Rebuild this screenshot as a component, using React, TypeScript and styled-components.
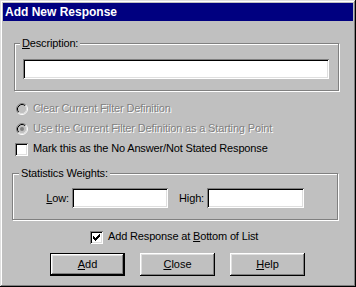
import React from "react";
import styled, { createGlobalStyle, css } from "styled-components";

const Global = createGlobalStyle`
  html, body { margin: 0; padding: 0; background: #c0c0c0; }
  body { font-family: "Liberation Sans", Arial, sans-serif; font-size: 11px; }
`;

const Window = styled.div`
  box-sizing: border-box;
  width: 356px;
  height: 287px;
  padding: 3px;
  background: #c0c0c0;
  box-shadow: inset -1px -1px #000, inset 1px 1px #dfdfdf, inset -2px -2px #808080,
    inset 2px 2px #fff;
  display: flex;
  flex-direction: column;
  font-family: "Liberation Sans", Arial, sans-serif;
  font-size: 11px;
  line-height: 13px;
  letter-spacing: -0.15px;
  color: #000;
`;

const TitleBar = styled.div`
  height: 18px;
  background: #000080;
  color: #fff;
  font-weight: bold;
  font-size: 12px;
  letter-spacing: 0;
  padding-left: 2px;
  display: flex;
  align-items: center;
  flex-shrink: 0;
`;

const Content = styled.div`
  display: flex;
  flex-direction: column;
  align-items: flex-start;
`;

const GroupBox = styled.fieldset<{ $left: number; $top: number; $width: number }>`
  box-sizing: border-box;
  margin: ${(p) => p.$top}px 0 0 ${(p) => p.$left}px;
  padding: 0;
  min-width: 0;
  width: ${(p) => p.$width}px;
  border: 1px solid #808080;
  box-shadow: inset 1px 1px #fff, 1px 1px #fff;
`;

const GroupLabel = styled.legend<{ $inset: number }>`
  margin-left: ${(p) => p.$inset}px;
  padding: 0 2px;
  line-height: 13px;
  background: #c0c0c0;
`;

const sunken = css`
  box-sizing: border-box;
  height: 20px;
  border: none;
  outline: none;
  background: #fff;
  padding: 2px 3px;
  font: inherit;
  box-shadow: inset 1px 1px #808080, inset -1px -1px #fff, inset 2px 2px #000,
    inset -2px -2px #dfdfdf;
`;

const TextField = styled.input<{ $width: number }>`
  ${sunken};
  width: ${(p) => p.$width}px;
  display: block;
`;

const DescField = styled(TextField)`
  margin: 9px 0 11px 8px;
`;

const StatRow = styled.div`
  display: flex;
  align-items: center;
  margin: 8px 0 11px 0;
`;

const FieldLabel = styled.label<{ $width: number }>`
  width: ${(p) => p.$width}px;
  text-align: right;
  margin-right: 3px;
  white-space: nowrap;
`;

const OptionRow = styled.label<{ $left: number; $top: number; $disabled?: boolean }>`
  display: flex;
  align-items: flex-start;
  height: 13px;
  margin: ${(p) => p.$top}px 0 0 ${(p) => p.$left}px;
  white-space: nowrap;
  color: ${(p) => (p.$disabled ? "#808080" : "#000")};
  text-shadow: ${(p) => (p.$disabled ? "1px 1px 0 #fff" : "none")};
`;

const OptionText = styled.span<{ $gap: number }>`
  margin-left: ${(p) => p.$gap}px;
`;

const RadioMark = styled.svg`
  width: 12px;
  height: 12px;
  margin-top: 1px;
  flex-shrink: 0;
`;

const CheckBox = styled.span`
  box-sizing: border-box;
  width: 13px;
  height: 13px;
  flex-shrink: 0;
  background: #fff;
  margin-top: 1px;
  box-shadow: inset 1px 1px #808080, inset -1px -1px #fff, inset 2px 2px #000,
    inset -2px -2px #dfdfdf;
  display: flex;
`;

const ButtonRow = styled.div`
  display: flex;
  gap: 15px;
  margin: 10px 0 0 47px;
`;

const Button = styled.button<{ $default?: boolean }>`
  box-sizing: border-box;
  width: 75px;
  height: 23px;
  border: none;
  padding: 0;
  background: #c0c0c0;
  font: inherit;
  line-height: 13px;
  color: #000;
  box-shadow: ${(p) =>
    p.$default
      ? "inset 0 0 0 1px #000, inset -2px -2px #000, inset 2px 2px #fff, inset -3px -3px #808080, inset 3px 3px #dfdfdf"
      : "inset -1px -1px #000, inset 1px 1px #fff, inset -2px -2px #808080, inset 2px 2px #dfdfdf"};
`;

function Radio({ checked }: { checked?: boolean }) {
  return (
    <RadioMark viewBox="0 0 12 12">
      <circle cx="6" cy="6" r="4.5" fill="#c0c0c0" />
      <path d="M2.11 9.89 A5.5 5.5 0 0 1 9.89 2.11" fill="none" stroke="#808080" />
      <path d="M9.89 2.11 A5.5 5.5 0 0 1 2.11 9.89" fill="none" stroke="#fff" />
      <path d="M2.82 9.18 A4.5 4.5 0 0 1 9.18 2.82" fill="none" stroke="#000" />
      <path d="M9.18 2.82 A4.5 4.5 0 0 1 2.82 9.18" fill="none" stroke="#dfdfdf" />
      {checked && <circle cx="6" cy="6" r="2" fill="#808080" />}
    </RadioMark>
  );
}

function Check({ checked }: { checked?: boolean }) {
  return (
    <CheckBox>
      {checked && (
        <svg width="13" height="13" viewBox="0 0 13 13" shapeRendering="crispEdges">
          <path
            fill="#000"
            d="M3 5h1v3h-1z M4 6h1v3h-1z M5 7h1v3h-1z M6 6h1v3h-1z M7 5h1v3h-1z M8 4h1v3h-1z M9 3h1v3h-1z"
          />
        </svg>
      )}
    </CheckBox>
  );
}

export default function App() {
  return (
    <>
      <Global />
      <Window>
        <TitleBar>Add New Response</TitleBar>
        <Content>
          <GroupBox $left={11} $top={16} $width={325}>
            <GroupLabel $inset={5}>
              <u>D</u>escription:
            </GroupLabel>
            <DescField $width={306} defaultValue="" />
          </GroupBox>

          <OptionRow $left={13} $top={11} $disabled>
            <Radio />
            <OptionText $gap={5}>Clear Current Filter Definition</OptionText>
          </OptionRow>
          <OptionRow $left={13} $top={7} $disabled>
            <Radio checked />
            <OptionText $gap={5}>Use the Current Filter Definition as a Starting Point</OptionText>
          </OptionRow>
          <OptionRow $left={12} $top={7}>
            <Check />
            <OptionText $gap={5}>Mark this as the No Answer/Not Stated Response</OptionText>
          </OptionRow>

          <GroupBox $left={9} $top={12} $width={326}>
            <GroupLabel $inset={6}>Statistics Weights:</GroupLabel>
            <StatRow>
              <FieldLabel $width={56}>
                <u>L</u>ow:
              </FieldLabel>
              <TextField $width={96} defaultValue="" />
              <FieldLabel $width={36}>
                Hi<u>g</u>h:
              </FieldLabel>
              <TextField $width={97} defaultValue="" />
            </StatRow>
          </GroupBox>

          <OptionRow $left={87} $top={10}>
            <Check checked />
            <OptionText $gap={5}>
              Add Response at <u>B</u>ottom of List
            </OptionText>
          </OptionRow>

          <ButtonRow>
            <Button $default>
              <u>A</u>dd
            </Button>
            <Button>
              <u>C</u>lose
            </Button>
            <Button>
              <u>H</u>elp
            </Button>
          </ButtonRow>
        </Content>
      </Window>
    </>
  );
}
